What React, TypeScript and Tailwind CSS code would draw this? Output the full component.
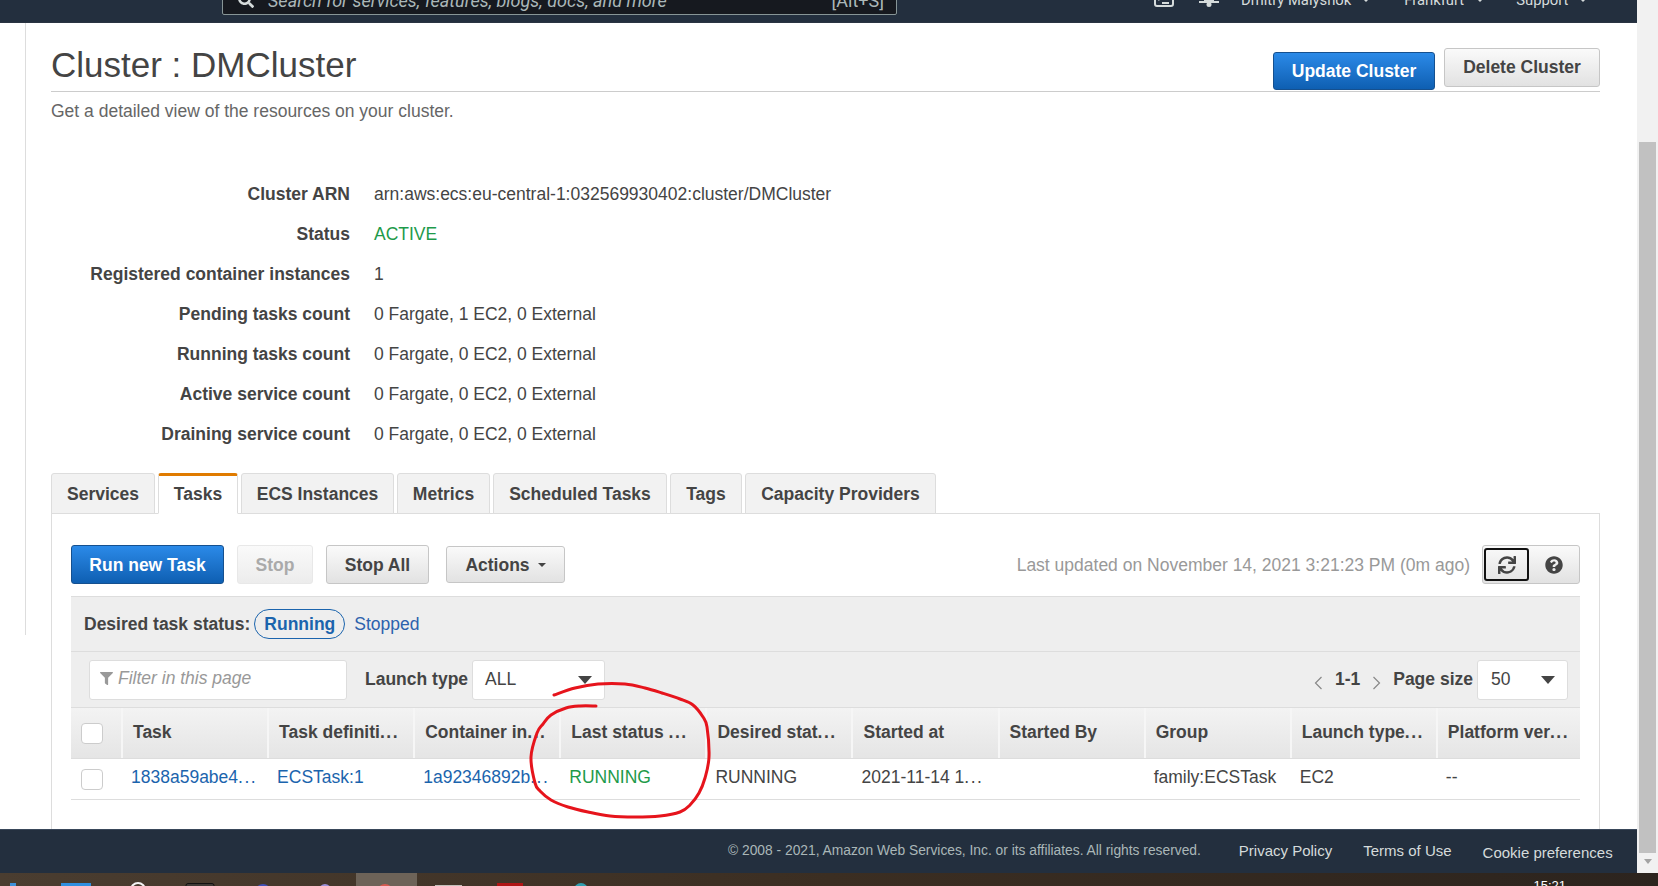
import React from "react";
import { FaSearch, FaSync, FaQuestionCircle, FaFilter } from "react-icons/fa";

const redPts: [number, number][] = [
  [554, 695], [575, 688], [598, 684], [625, 684], [645, 688], [662, 693], [680, 699], [693, 705], [703, 717], [707, 727], [709, 757], [705, 778], [699, 793], [690, 805], [680, 812],
  [660, 816], [635, 817], [610, 816], [588, 812], [568, 807], [551, 800], [540, 791], [535, 783], [531, 757], [537, 733], [543, 724], [551, 715], [566, 708], [580, 706], [596, 706],
];
function smooth(p: [number, number][]) {
  let d = `M${p[0][0]} ${p[0][1]}`;
  for (let i = 0; i < p.length - 1; i++) {
    const a = p[Math.max(i - 1, 0)], b = p[i], c = p[i + 1], e = p[Math.min(i + 2, p.length - 1)];
    d += ` C${b[0] + (c[0] - a[0]) / 6} ${b[1] + (c[1] - a[1]) / 6} ${c[0] - (e[0] - b[0]) / 6} ${c[1] - (e[1] - b[1]) / 6} ${c[0]} ${c[1]}`;
  }
  return d;
}

const Caret = () => <span className="inline-block border-x-[4px] border-t-[4px] border-x-transparent border-t-[#d5dbdb]" />;
const BigCaret = () => <span className="inline-block border-x-[7px] border-t-[8px] border-x-transparent border-t-[#444]" />;

function Dots({ t }: { t: string }) {
  if (!t.endsWith("...")) return <>{t}</>;
  return (
    <>
      {t.slice(0, -3)}
      <span className="tracking-[1.5px]">...</span>
    </>
  );
}

function Details() {
  const rows: [string, string, boolean?][] = [
    ["Cluster ARN", "arn:aws:ecs:eu-central-1:032569930402:cluster/DMCluster"],
    ["Status", "ACTIVE", true],
    ["Registered container instances", "1"],
    ["Pending tasks count", "0 Fargate, 1 EC2, 0 External"],
    ["Running tasks count", "0 Fargate, 0 EC2, 0 External"],
    ["Active service count", "0 Fargate, 0 EC2, 0 External"],
    ["Draining service count", "0 Fargate, 0 EC2, 0 External"],
  ];
  return (
    <div className="mt-[51px] flex flex-col">
      {rows.map(([l, v, g]) => (
        <div key={l} className="flex h-[40px] items-center text-[17.5px]">
          <div className="w-[299px] text-right font-bold text-[#444]">{l}</div>
          <div className={`ml-[24px] ${g ? "text-[#1e9a4a]" : "text-[#444]"}`}>{v}</div>
        </div>
      ))}
    </div>
  );
}

function Tabs() {
  const tabs: [string, string, boolean?][] = [
    ["Services", "w-[104px]"],
    ["Tasks", "w-[80px]", true],
    ["ECS Instances", "w-[153px]"],
    ["Metrics", "w-[93px]"],
    ["Scheduled Tasks", "w-[174px]"],
    ["Tags", "w-[72px]"],
    ["Capacity Providers", "w-[191px]"],
  ];
  return (
    <div className="relative z-10 mt-[19px] -mb-px flex h-[41px] gap-[3px] text-[17.5px] font-bold text-[#444]">
      {tabs.map(([t, w, a]) => (
        <div
          key={t}
          className={`${w} flex items-center justify-center whitespace-nowrap rounded-t-[3px] border border-[#ddd] ${
            a ? "border-t-[3px] border-t-[#e07b00] border-b-white bg-white" : "border-b-[#ddd] bg-[#f2f2f2] pt-[2px]"
          }`}
        >
          {t}
        </div>
      ))}
    </div>
  );
}

const btn = "flex items-center justify-center whitespace-nowrap rounded-[3px] border text-[17.5px] font-bold";
const primary = "border-[#15508f] bg-gradient-to-b from-[#2b8ae8] to-[#0e5fb2] text-white";
const secondary = "border-[#c6c6c6] bg-gradient-to-b from-[#fafafa] to-[#e2e2e2] text-[#444]";

function Toolbar() {
  return (
    <div className="flex h-[51px] items-start pt-0">
      <div className={`${btn} ${primary} h-[39px] w-[153px] pt-[2px]`}>Run new Task</div>
      <div className={`${btn} ml-[13px] h-[39px] w-[76px] border-[#e8e8e8] bg-gradient-to-b from-[#fafafa] to-[#ececec] pt-[2px] text-[#aaa]`}>Stop</div>
      <div className={`${btn} ${secondary} ml-[13px] h-[39px] w-[103px] pt-[2px]`}>Stop All</div>
      <div className={`${btn} ${secondary} ml-[17px] mt-[1px] h-[37px] w-[119px] pt-[1px]`}>
        Actions
        <span className="ml-[8px] inline-block border-x-[4px] border-t-[4px] border-x-transparent border-t-[#444]" />
      </div>
      <div className="ml-auto flex h-[39px] items-center whitespace-nowrap pt-[2px] text-[17.5px] text-[#999]">Last updated on November 14, 2021 3:21:23 PM (0m ago)</div>
      <div className={`ml-[12px] flex h-[39px] w-[98px] items-center rounded-[3px] border ${secondary}`}>
        <div className="ml-[1px] flex h-[33px] w-[45px] items-center justify-center rounded-[3px] border-2 border-[#111]">
          <FaSync className="h-[18px] w-[18px] text-[#444]" />
        </div>
        <div className="flex h-full flex-1 items-center justify-center">
          <FaQuestionCircle className="h-[18px] w-[18px] text-[#444]" />
        </div>
      </div>
    </div>
  );
}

const Chevron = ({ right }: { right?: boolean }) => (
  <svg width="9" height="14" viewBox="0 0 9 14" fill="none" stroke="#888" strokeWidth="1.2" className="mt-[6px]">
    <path d={right ? "M1.5 1 L7.5 7 L1.5 13" : "M7.5 1 L1.5 7 L7.5 13"} />
  </svg>
);

function FilterBars() {
  return (
    <div className="flex flex-col border-t border-[#ddd] bg-[#eee]">
      <div className="flex h-[55px] items-center whitespace-nowrap border-b border-[#ddd] pl-[13px] text-[17.5px]">
        <span className="font-bold text-[#444]">Desired task status:</span>
        <span className="ml-[4px] flex h-[30px] w-[91px] items-center justify-center rounded-full border border-[#1b64ad] font-bold text-[#1b64ad]">Running</span>
        <span className="ml-[9px] text-[#2d62ad]">Stopped</span>
      </div>
      <div className="flex h-[55px] items-center whitespace-nowrap pl-[18px] text-[17.5px]">
        <div className="flex h-[40px] w-[258px] items-center rounded-[3px] border border-[#ddd] bg-white pb-[2px] pl-[10px] italic text-[#999]">
          <FaFilter className="mr-[5px] h-[13px] w-[13px]" />
          Filter in this page
        </div>
        <span className="ml-[18px] font-bold text-[#444]">Launch type</span>
        <div className="ml-[4px] flex h-[40px] w-[133px] items-center justify-between rounded-[3px] border border-[#ddd] bg-white pl-[12px] pr-[12px] text-[#444]">
          ALL
          <BigCaret />
        </div>
        <span className="ml-auto flex"><Chevron /></span>
        <span className="ml-[12px] font-bold text-[#444]">1-1</span>
        <span className="ml-[12px] flex"><Chevron right /></span>
        <span className="ml-[12px] font-bold text-[#444]">Page size</span>
        <div className="ml-[4px] mr-[12px] flex h-[40px] w-[91px] items-center justify-between rounded-[3px] border border-[#ddd] bg-white pl-[13px] pr-[12px] text-[#444]">
          50
          <BigCaret />
        </div>
      </div>
    </div>
  );
}

const Check = () => <span className="block h-[21px] w-[22px] rounded-[4px] border border-[#ccc] bg-white" />;

function Table() {
  const heads = ["Task", "Task definiti...", "Container in...", "Last status ...", "Desired stat...", "Started at", "Started By", "Group", "Launch type...", "Platform ver..."];
  const cells: [string, string][] = [
    ["1838a59abe4...", "text-[#1b64ad]"],
    ["ECSTask:1", "text-[#1b64ad]"],
    ["1a92346892b...", "text-[#1b64ad]"],
    ["RUNNING", "text-[#1e9a4a]"],
    ["RUNNING", "text-[#444]"],
    ["2021-11-14 1...", "text-[#444]"],
    ["", ""],
    ["family:ECSTask", "text-[#444]"],
    ["EC2", "text-[#444]"],
    ["--", "text-[#444]"],
  ];
  const grid = "grid grid-cols-[50px_repeat(9,146.1px)_1fr]";
  return (
    <div className="flex flex-col text-[17.5px]">
      <div className={`${grid} h-[52px] border-y border-[#ddd] bg-gradient-to-b from-[#f3f3f3] to-[#e5e5e5] font-bold text-[#444]`}>
        <div className="flex items-center pl-[10px]"><Check /></div>
        {heads.map((h) => (
          <div key={h} className="flex items-center whitespace-nowrap border-l-2 border-[#f6f6f6] pb-[2px] pl-[10px]">
            <span><Dots t={h} /></span>
          </div>
        ))}
      </div>
      <div className={`${grid} h-[41px] border-b border-[#ddd]`}>
        <div className="flex items-center pl-[10px]"><Check /></div>
        {cells.map(([c, cl], i) => (
          <div key={i} className={`flex items-center whitespace-nowrap pb-[3px] pl-[10px] ${cl}`}>
            <span><Dots t={c} /></span>
          </div>
        ))}
      </div>
    </div>
  );
}

function Strip() {
  return (
    <svg width="640" height="13" viewBox="0 0 640 13" className="block">
      <rect x="356" y="0" width="61" height="13" fill="#6d6358" />
      <rect x="10" y="10" width="6" height="3" fill="#3d8fd8" />
      <rect x="61" y="10" width="30" height="3" fill="#2f8fe0" />
      <circle cx="138" cy="17" r="7" fill="none" stroke="#f4f4f4" strokeWidth="2" />
      <rect x="186" y="10.5" width="28" height="8" rx="2" fill="#3f3a36" stroke="#111" />
      <circle cx="263" cy="19" r="8" fill="#4050b8" />
      <circle cx="325" cy="17" r="6" fill="#9a90d8" />
      <circle cx="385" cy="19" r="8" fill="#d85a50" />
      <rect x="435" y="12" width="27" height="3" fill="#c4c0ba" />
      <rect x="497" y="10" width="26" height="3" fill="#b01515" />
      <circle cx="581" cy="17" r="7" fill="#2f9fb0" />
    </svg>
  );
}

export default function App() {
  return (
    <div className="relative flex h-[886px] w-[1658px] flex-col overflow-hidden bg-[#3a2e24] font-['Liberation_Sans',Arial,sans-serif]">
      <div className="flex h-[873px]">
        <div className="flex w-[1637px] flex-col bg-white">
          <div className="h-[23px] shrink-0 overflow-hidden border-b border-[#2a3442] bg-[#232f3e]">
            <div className="-mt-[15px] flex h-[30px] items-center pl-[222px] font-['Roboto',sans-serif] text-[#d5dbdb]">
              <div className="flex h-[30px] w-[675px] shrink-0 items-center rounded-[2px] border border-[#879596] bg-[#16191f] pl-[15px]">
                <FaSearch className="h-[16px] w-[16px] text-[#d5dbdb]" />
                <span className="ml-[14px] whitespace-nowrap text-[18px] italic text-[#aab7b8]">Search for services, features, blogs, docs, and more</span>
                <span className="ml-auto mr-[12px] text-[18px] text-[#aab7b8]">[Alt+S]</span>
              </div>
              <svg width="20" height="22" viewBox="0 0 20 22" className="mb-[8px] ml-[257px] shrink-0" fill="none" stroke="#d5dbdb" strokeWidth="2">
                <rect x="1" y="1" width="18" height="20" rx="2" />
                <path d="M4 15 L11 11 M8 18 H15" />
              </svg>
              <svg width="20" height="22" viewBox="0 0 20 22" className="mb-[8px] ml-[25px] shrink-0" fill="#d5dbdb">
                <path d="M0 16 H20 V18 H0 Z M5 6 H15 V16 H5 Z" />
                <circle cx="10" cy="19.5" r="2.5" />
              </svg>
              <span className="ml-[22px] whitespace-nowrap text-[14.8px]">Dmitry Malyshok</span>
              <span className="ml-[11px] flex"><Caret /></span>
              <span className="ml-[34px] text-[14.8px]">Frankfurt</span>
              <span className="ml-[12px] flex"><Caret /></span>
              <span className="ml-[32px] text-[14.8px]">Support</span>
              <span className="ml-[11px] flex"><Caret /></span>
            </div>
          </div>

          <div className="flex flex-1 overflow-hidden">
            <div className="ml-[25px] h-[612px] w-px shrink-0 bg-[#ddd]" />
            <div className="ml-[25px] flex w-[1549px] flex-col">
              <div className="flex h-[69px] shrink-0 items-start justify-between border-b border-[#ccc]">
                <h1 className="mt-[23px] text-[35px] leading-[38px] text-[#444]">Cluster : DMCluster</h1>
                <div className="flex items-start">
                  <div className={`${btn} ${primary} mt-[29px] h-[38px] w-[162px]`}>Update Cluster</div>
                  <div className={`${btn} ${secondary} ml-[9px] mt-[25px] h-[39px] w-[156px]`}>Delete Cluster</div>
                </div>
              </div>
              <p className="mt-[7px] h-[24px] text-[17.5px] leading-[24px] text-[#666]">Get a detailed view of the resources on your cluster.</p>
              <Details />
              <Tabs />
              <div className="flex flex-1 flex-col border-x border-t border-[#ddd] px-[19px] pt-[31px]">
                <Toolbar />
                <FilterBars />
                <Table />
              </div>
            </div>
          </div>

          <div className="flex h-[44px] shrink-0 items-center whitespace-nowrap border-t border-[#39475a] bg-[#232f3e] pl-[728px] text-[#d5dbdb]">
            <span className="text-[13.8px] text-[#aab7b8]">© 2008 - 2021, Amazon Web Services, Inc. or its affiliates. All rights reserved.</span>
            <span className="ml-[38px] text-[15px]">Privacy Policy</span>
            <span className="ml-[31px] text-[15px]">Terms of Use</span>
            <span className="ml-[31px] mt-[3px] text-[15px]">Cookie preferences</span>
          </div>
        </div>

        <div className="flex w-[21px] flex-col bg-[#f1f1f1] pl-[2px] pr-[2px] pt-[142px]">
          <div className="h-[711px] bg-[#c1c1c1]" />
          <div className="mt-[6px] flex justify-center">
            <span className="inline-block border-x-[4px] border-t-[5px] border-x-transparent border-t-[#a3a3a3]" />
          </div>
        </div>
      </div>

      <div className="flex h-[13px] items-start justify-between overflow-hidden bg-gradient-to-r from-[#4a3d30] via-[#3b2e22] to-[#2c241e] pr-[92px]">
        <Strip />
        <span className="mt-[5px] text-[13px] leading-[16px] text-white">15:21</span>
      </div>

      <svg className="pointer-events-none absolute inset-0" width="1658" height="886" viewBox="0 0 1658 886" fill="none">
        <path d={smooth(redPts)} stroke="#e6141c" strokeWidth="3" strokeLinecap="round" />
      </svg>
    </div>
  );
}
